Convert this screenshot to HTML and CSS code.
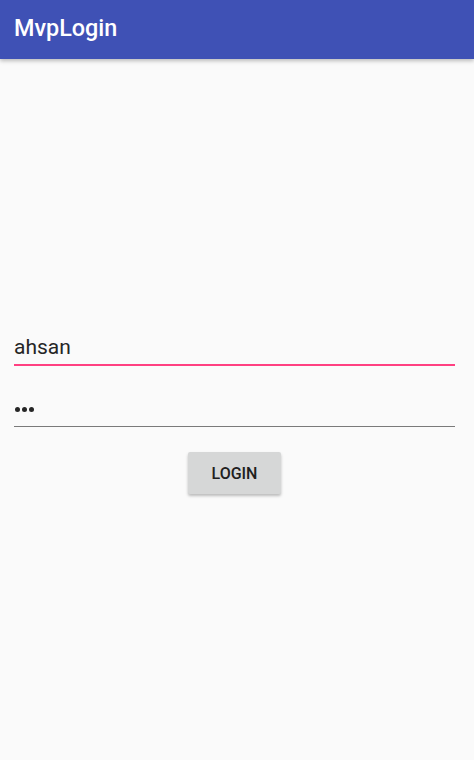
FILE: index.html
```html
<!DOCTYPE html>
<html>
<head>
<meta charset="utf-8">
<link rel="stylesheet" href="styles.css">
</head>
<body>
<header class="toolbar"><span class="title">MvpLogin</span></header>
<main class="content">
  <div class="field focused"><span class="value">ahsan</span></div>
  <div class="field password"><span class="dots" aria-label="•••"><i class="dot"></i><i class="dot"></i><i class="dot"></i></span></div>
  <div class="actions"><button class="btn">LOGIN</button></div>
</main>
</body>
</html>
```
FILE: styles.css
```css
html, body {
  margin: 0;
  padding: 0;
  background: #fafafa;
  font-family: Roboto, "Noto Sans", sans-serif;
  height: 100%;
}
.toolbar {
  height: 59px;
  background: #3f51b5;
  box-shadow: 0 2px 4px rgba(0,0,0,0.25);
  display: flex;
  align-items: center;
  padding-left: 14px;
  position: relative;
  z-index: 1;
}
.title {
  color: #fff;
  font-size: 23.4px;
  font-weight: 500;
  line-height: 1;
  margin-top: -1px;
}
.content {
  padding: 272px 19px 0 14px;
  display: flex;
  flex-direction: column;
}
.field {
  height: 35px;
  border-bottom: 1px solid #7a7a7a;
  display: flex;
  align-items: flex-end;
  padding-bottom: 6px;
  box-sizing: border-box;
}
.field.focused {
  border-bottom: 2px solid #ff4081;
}
.field.password {
  margin-top: 25px;
  height: 36px;
  padding-bottom: 14px;
}
.value {
  font-size: 21px;
  color: #262626;
  line-height: 1;
}
.dots {
  display: flex;
  gap: 2px;
  padding-left: 1px;
}
.dot {
  display: block;
  width: 5px;
  height: 5px;
  border-radius: 50%;
  background: #262626;
}
.actions {
  display: flex;
  justify-content: center;
  margin-top: 25px;
}
.btn {
  width: 93px;
  height: 42px;
  background: #d6d7d7;
  border: none;
  border-radius: 2px;
  box-shadow: 0 2px 3px rgba(0,0,0,0.25);
  font-family: Roboto, sans-serif;
  font-weight: 500;
  font-size: 16px;
  color: #202020;
  padding: 0;
}
```
